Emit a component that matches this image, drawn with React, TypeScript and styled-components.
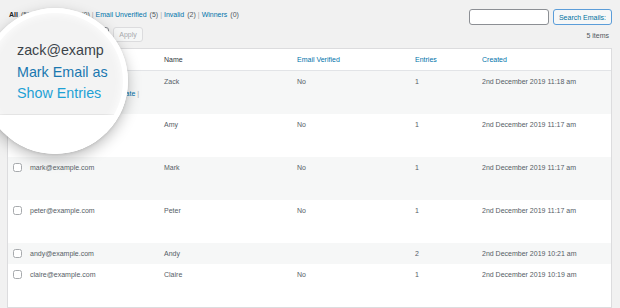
import React from "react";
import styled, { createGlobalStyle } from "styled-components";

const GlobalStyle = createGlobalStyle`
  html, body {
    margin: 0;
    padding: 0;
    background: #f1f1f1;
  }
  body {
    font-family: "Liberation Sans", Arial, sans-serif;
    color: #50575e;
  }
  * {
    box-sizing: border-box;
  }
`;

const Page = styled.div`
  position: relative;
  width: 620px;
  height: 308px;
  overflow: hidden;
  padding: 9px 8px 0 7px;
  font-size: 7px;
`;

const TopBar = styled.div`
  display: flex;
  justify-content: space-between;
  align-items: flex-start;
  height: 16px;
`;

const Views = styled.ul`
  list-style: none;
  margin: 0;
  padding: 0 0 0 2px;
  display: flex;
  line-height: 12px;
`;

const ViewLink = styled.a<{ $current?: boolean }>`
  color: ${(p) => (p.$current ? "#1d2327" : "#0073aa")};
  font-weight: ${(p) => (p.$current ? 700 : 400)};
  text-decoration: none;
`;

const Count = styled.span`
  margin-left: 3px;
  color: #50575e;
`;

const Sep = styled.span`
  margin: 0 2px;
  color: #a7aaad;
`;

const SearchBox = styled.div`
  display: flex;
  gap: 4px;
`;

const SearchInput = styled.input`
  width: 80px;
  height: 16px;
  margin: 0;
  padding: 0 4px;
  border: 1px solid #8c8f94;
  border-radius: 3px;
  background: #fff;
`;

const Button = styled.button<{ $variant: "outline" | "disabled" }>`
  height: ${(p) => (p.$variant === "outline" ? "16px" : "15px")};
  margin: 0;
  padding: 0 4px;
  font-family: inherit;
  font-size: 7px;
  border-radius: 3px;
  background: #f6f7f7;
  border: 1px solid ${(p) => (p.$variant === "outline" ? "#5b9dd9" : "#dcdcde")};
  color: ${(p) => (p.$variant === "outline" ? "#0071a1" : "#a7aaad")};
  width: ${(p) => (p.$variant === "outline" ? "59px" : "30px")};
`;

const ActionsBar = styled.div`
  display: flex;
  justify-content: space-between;
  align-items: flex-start;
  margin-top: 2px;
  height: 15px;
`;

const BulkGroup = styled.div`
  display: flex;
  gap: 4px;
`;

const BulkSelect = styled.select`
  appearance: none;
  width: 102px;
  height: 15px;
  margin: 0;
  border: 1px solid #8c8f94;
  border-radius: 3px;
  background: #fff;
  font-size: 7px;
  color: #2c3338;
`;

const ItemsCount = styled.div`
  padding-top: 4px;
  margin-right: 3px;
  line-height: 9px;
  color: #50575e;
`;

const Table = styled.div`
  margin-top: 6px;
  border: 1px solid #dcdcde;
  background: #fff;
`;

const columns = "20px 134px 133px 118px 67px 1fr";

const HeaderRow = styled.div`
  display: grid;
  grid-template-columns: ${columns};
  align-items: center;
  height: 22px;
  border-bottom: 1px solid #e2e4e7;
  background: #fff;
`;

const HeadCell = styled.div<{ $link?: boolean }>`
  padding-left: 2px;
  color: ${(p) => (p.$link ? "#0073aa" : "#32373c")};
`;

const Row = styled.div<{ $striped: boolean; $compact?: boolean }>`
  display: grid;
  grid-template-columns: ${columns};
  align-items: start;
  height: ${(p) => (p.$compact ? "21px" : "43px")};
  padding-top: 6px;
  line-height: 9px;
  background: ${(p) => (p.$striped ? "#f6f7f7" : "#fff")};
  color: #555d66;
`;

const Cell = styled.div`
  padding-left: 2px;
  white-space: nowrap;
`;

const CheckCell = styled.div`
  padding-left: 5px;
`;

const CheckBox = styled.span`
  display: block;
  width: 9px;
  height: 9px;
  border: 1px solid #a7aaad;
  border-radius: 2.5px;
  background: #fff;
`;

const RowActions = styled.div`
  margin-top: 3px;
  color: #0073aa;
`;

const ActionSep = styled.span`
  color: #a7aaad;
`;

const Magnifier = styled.div`
  position: absolute;
  left: -18px;
  top: 8px;
  width: 146px;
  height: 146px;
  border-radius: 50%;
  overflow: hidden;
  background: #fff;
  box-shadow: 0 5px 14px rgba(0, 0, 0, 0.25), 0 1px 3px rgba(0, 0, 0, 0.1);

  &::after {
    content: "";
    position: absolute;
    inset: 0;
    border-radius: 50%;
    box-shadow: inset 0 0 0 5px #fff, inset 0 0 10px 6px rgba(255, 255, 255, 0.85);
    pointer-events: none;
  }
`;

const MagRow = styled.div`
  height: 107px;
  padding: 32px 0 0 35px;
  background: #f3f3f3;
  border-bottom: 1px solid #e4e4e4;
  font-size: 14.3px;
  line-height: 21.5px;
  white-space: nowrap;
`;

const MagLine = styled.div<{ $tone: "text" | "link" | "light" }>`
  color: ${(p) =>
    p.$tone === "text" ? "#3c434a" : p.$tone === "link" ? "#1a78b0" : "#1ea1d5"};
`;

type Entry = {
  email: string;
  name: string;
  verified: string;
  entries: number;
  created: string;
  compact?: boolean;
  actions?: boolean;
};

const rows: Entry[] = [
  { email: "zack@example.com", name: "Zack", verified: "No", entries: 1, created: "2nd December 2019 11:18 am", actions: true },
  { email: "amy@example.com", name: "Amy", verified: "No", entries: 1, created: "2nd December 2019 11:17 am" },
  { email: "mark@example.com", name: "Mark", verified: "No", entries: 1, created: "2nd December 2019 11:17 am" },
  { email: "peter@example.com", name: "Peter", verified: "No", entries: 1, created: "2nd December 2019 11:17 am" },
  { email: "andy@example.com", name: "Andy", verified: "", entries: 2, created: "2nd December 2019 10:21 am", compact: true },
  { email: "claire@example.com", name: "Claire", verified: "No", entries: 1, created: "2nd December 2019 10:19 am" },
];

const views = [
  { label: "All", count: 5, current: true },
  { label: "Email Verified", count: 0 },
  { label: "Email Unverified", count: 5 },
  { label: "Invalid", count: 2 },
  { label: "Winners", count: 0 },
];

export default function App() {
  return (
    <>
      <GlobalStyle />
      <Page>
        <TopBar>
          <Views>
            {views.map((v, i) => (
              <li key={v.label}>
                {i > 0 && <Sep>|</Sep>}
                <ViewLink $current={v.current}>{v.label}</ViewLink>
                <Count>({v.count})</Count>
              </li>
            ))}
          </Views>
          <SearchBox>
            <SearchInput type="search" />
            <Button $variant="outline">Search Emails:</Button>
          </SearchBox>
        </TopBar>

        <ActionsBar>
          <BulkGroup>
            <BulkSelect>
              <option>Bulk Actions</option>
            </BulkSelect>
            <Button $variant="disabled">Apply</Button>
          </BulkGroup>
          <ItemsCount>5 items</ItemsCount>
        </ActionsBar>

        <Table>
          <HeaderRow>
            <CheckCell>
              <CheckBox />
            </CheckCell>
            <HeadCell>Email</HeadCell>
            <HeadCell>Name</HeadCell>
            <HeadCell $link>Email Verified</HeadCell>
            <HeadCell $link>Entries</HeadCell>
            <HeadCell $link>Created</HeadCell>
          </HeaderRow>
          {rows.map((r, i) => (
            <Row key={r.email} $striped={i % 2 === 0} $compact={r.compact}>
              <CheckCell>
                <CheckBox />
              </CheckCell>
              <Cell>
                {r.email}
                {r.actions && (
                  <RowActions>
                    Mark Email as Verified <ActionSep>|</ActionSep> Invalidate <ActionSep>|</ActionSep>
                  </RowActions>
                )}
              </Cell>
              <Cell>{r.name}</Cell>
              <Cell>{r.verified}</Cell>
              <Cell>{r.entries}</Cell>
              <Cell>{r.created}</Cell>
            </Row>
          ))}
        </Table>

        <Magnifier>
          <MagRow>
            <MagLine $tone="text">zack@examp</MagLine>
            <MagLine $tone="link">Mark Email as</MagLine>
            <MagLine $tone="light">Show Entries</MagLine>
          </MagRow>
        </Magnifier>
      </Page>
    </>
  );
}
